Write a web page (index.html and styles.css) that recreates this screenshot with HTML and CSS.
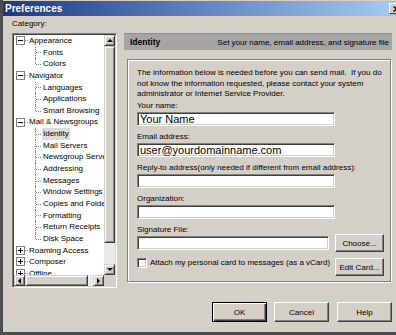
FILE: index.html
```html
<!DOCTYPE html>
<html lang="en">
<head>
    <meta charset="UTF-8">
    <title>Preferences</title>
    <link rel="stylesheet" href="styles.css">
</head>
<body>

<div class="window">
    <div class="titlebar">
        <span class="title">Preferences</span>
        <span class="close-btn">
            <svg width="7" height="6" viewBox="0 0 7 6"><path d="M0.5 0.5 L6.5 5.5 M6.5 0.5 L0.5 5.5" stroke="#000" stroke-width="1.4"/></svg>
        </span>
    </div>

    <div class="content">
        <div class="panes">
            <div class="left-pane">
                <div class="cat-label">Category:</div>
                <div class="tree-box">
                    <div class="tree-main">
                        <div class="tree-list">
                            <div class="node"><span class="exp minus"></span><span class="dash"></span><span class="lbl">Appearance</span></div>
                            <div class="child"><span class="lbl">Fonts</span></div>
                            <div class="child last"><span class="lbl">Colors</span></div>
                            <div class="node"><span class="exp minus"></span><span class="dash"></span><span class="lbl">Navigator</span></div>
                            <div class="child"><span class="lbl">Languages</span></div>
                            <div class="child"><span class="lbl">Applications</span></div>
                            <div class="child last"><span class="lbl">Smart Browsing</span></div>
                            <div class="node"><span class="exp minus"></span><span class="dash"></span><span class="lbl">Mail &amp; Newsgroups</span></div>
                            <div class="child"><span class="lbl sel">Identity</span></div>
                            <div class="child"><span class="lbl">Mail Servers</span></div>
                            <div class="child"><span class="lbl">Newsgroup Servers</span></div>
                            <div class="child"><span class="lbl">Addressing</span></div>
                            <div class="child"><span class="lbl">Messages</span></div>
                            <div class="child"><span class="lbl">Window Settings</span></div>
                            <div class="child"><span class="lbl">Copies and Folders</span></div>
                            <div class="child"><span class="lbl">Formatting</span></div>
                            <div class="child"><span class="lbl">Return Receipts</span></div>
                            <div class="child last"><span class="lbl">Disk Space</span></div>
                            <div class="node"><span class="exp plus"></span><span class="dash"></span><span class="lbl">Roaming Access</span></div>
                            <div class="node"><span class="exp plus"></span><span class="dash"></span><span class="lbl">Composer</span></div>
                            <div class="node"><span class="exp plus"></span><span class="dash"></span><span class="lbl">Offline</span></div>
                        </div>
                        <div class="vscroll">
                            <div class="sbtn"><span class="arrow up"></span></div>
                            <div class="vthumb raised"></div>
                            <div class="track"></div>
                            <div class="sbtn"><span class="arrow down"></span></div>
                        </div>
                    </div>
                    <div class="hscroll">
                        <div class="sbtn"><span class="arrow left"></span></div>
                        <div class="hthumb raised"></div>
                        <div class="track"></div>
                        <div class="sbtn"><span class="arrow right"></span></div>
                        <div class="corner"></div>
                    </div>
                </div>
            </div>

            <div class="right-pane">
                <div class="pane-header">
                    <span class="pane-title">Identity</span>
                    <span class="pane-desc">Set your name, email address, and signature file</span>
                </div>
                <div class="groupbox">
                    <p class="intro">The information below is needed before you can send mail.&nbsp; If you do not know the information requested, please contact your system administrator or Internet Service Provider.</p>

                    <div class="field">
                        <div class="flabel">Your name:</div>
                        <input class="tbox" type="text" value="Your Name">
                    </div>
                    <div class="field">
                        <div class="flabel">Email address:</div>
                        <input class="tbox" type="text" value="user@yourdomainname.com">
                    </div>
                    <div class="field">
                        <div class="flabel">Reply-to address(only needed if different from email address):</div>
                        <input class="tbox" type="text" value="">
                    </div>
                    <div class="field">
                        <div class="flabel">Organization:</div>
                        <input class="tbox" type="text" value="">
                    </div>
                    <div class="field sig">
                        <div class="flabel">Signature File:</div>
                        <div class="sig-row">
                            <input class="tbox short" type="text" value="">
                            <button class="btn side-btn">Choose...</button>
                        </div>
                    </div>
                    <div class="check-row">
                        <span class="check"></span>
                        <span class="check-label">Attach my personal card to messages (as a vCard)</span>
                        <button class="btn side-btn">Edit Card...</button>
                    </div>
                </div>
            </div>
        </div>

        <div class="footer">
            <button class="btn dlg-btn default">OK</button>
            <button class="btn dlg-btn">Cancel</button>
            <button class="btn dlg-btn help">Help</button>
        </div>
    </div>
</div>

</body>
</html>
```

FILE: styles.css
```css
body {
    margin: 0;
    background-color: #d4d0c8;
    font-family: "Liberation Sans", Arial, sans-serif;
    font-size: 8px;
    color: #000;
    overflow: hidden;
}
.window {
    width: 396px;
    height: 335px;
    box-sizing: border-box;
    border-left: 3px solid #4d4d4d;
    border-bottom: 3px solid #4d4d4d;
    padding-top: 1px;
}
.titlebar {
    height: 15px;
    display: flex;
    align-items: center;
    justify-content: space-between;
    padding-left: 2px;
    background: linear-gradient(to right, #1c3a84, #5a7cba 45%, #a6caf0);
}
.title {
    color: #fff;
    font-weight: bold;
    font-size: 10px;
}
.close-btn {
    width: 14px;
    height: 11px;
    margin-right: -7px;
    box-sizing: border-box;
    display: flex;
    align-items: center;
    justify-content: center;
    background: #d4d0c8;
    border: 1px solid;
    border-color: #fff #404040 #404040 #fff;
}
.content {
    padding: 3px 4px 0 9px;
}
.panes {
    display: flex;
    gap: 7px;
}
.left-pane {
    width: 105px;
}
.cat-label {
    line-height: 10px;
    margin-bottom: 4px;
}
.tree-box {
    height: 255px;
    box-sizing: border-box;
    border: 1px solid;
    border-color: #808080 #fff #fff #808080;
    box-shadow: inset 1px 1px #404040, inset -1px -1px #d4d0c8;
    padding: 1px;
    background: #fff;
    display: flex;
    flex-direction: column;
}
.tree-main {
    flex: 1;
    display: flex;
    min-height: 0;
}
.tree-list {
    flex: 1;
    overflow: hidden;
    white-space: nowrap;
}
.node, .child {
    height: 11.65px;
    line-height: 11.65px;
    position: relative;
}
.node {
    display: flex;
    align-items: center;
    padding-left: 2px;
}
.child {
    padding-left: 28px;
}
.child::before {
    content: "";
    position: absolute;
    left: 21px;
    top: 0;
    height: 100%;
    border-left: 1px dotted #808080;
}
.child.last::before {
    height: 50%;
}
.child::after {
    content: "";
    position: absolute;
    left: 22px;
    top: 50%;
    width: 5px;
    border-top: 1px dotted #808080;
}
.exp {
    width: 9px;
    height: 9px;
    box-sizing: border-box;
    border: 1px solid #808080;
}
.exp.minus {
    background: linear-gradient(#000, #000) center / 5px 1px no-repeat, #fff;
}
.exp.plus {
    background: linear-gradient(#000, #000) center / 5px 1px no-repeat,
                linear-gradient(#000, #000) center / 1px 5px no-repeat, #fff;
}
.dash {
    width: 3px;
    border-top: 1px dotted #808080;
}
.lbl {
    display: inline-block;
    padding: 0 1px;
    line-height: 11.65px;
}
.lbl.sel {
    background: #dcdcdc;
}
.vscroll {
    width: 11px;
    display: flex;
    flex-direction: column;
}
.hscroll {
    height: 11px;
    display: flex;
}
.sbtn, .raised {
    background: #d4d0c8;
    box-sizing: border-box;
    border: 1px solid;
    border-color: #d4d0c8 #404040 #404040 #d4d0c8;
    box-shadow: inset 1px 1px #fff, inset -1px -1px #808080;
}
.sbtn {
    width: 11px;
    height: 11px;
    flex-shrink: 0;
    display: flex;
    align-items: center;
    justify-content: center;
}
.vthumb {
    height: 197px;
}
.hthumb {
    width: 63px;
}
.track {
    flex: 1;
    background: #ebe9e4;
}
.corner {
    width: 11px;
    background: #d4d0c8;
}
.arrow {
    width: 0;
    height: 0;
    border: 3px solid transparent;
}
.arrow.up {
    border-top: 0;
    border-bottom-color: #000;
}
.arrow.down {
    border-bottom: 0;
    border-top-color: #000;
}
.arrow.left {
    border-left: 0;
    border-right-color: #000;
}
.arrow.right {
    border-right: 0;
    border-left-color: #000;
}
.right-pane {
    width: 268px;
    padding-top: 14px;
}
.pane-header {
    height: 17px;
    display: flex;
    align-items: center;
    justify-content: space-between;
    padding: 0 3px 0 6px;
    background: #a5a5a5;
    border-top: 1px solid #8e8e8e;
    box-sizing: border-box;
}
.pane-title {
    font-weight: bold;
    font-size: 8.5px;
}
.groupbox {
    margin: 9px 1px 0 3px;
    height: 223px;
    box-sizing: border-box;
    border: 1px solid #808080;
    box-shadow: inset 1px 1px #fff, 1px 1px #fff;
    padding: 8px 6px 0 9px;
}
.intro {
    margin: 0 0 1.5px 0;
    line-height: 10.5px;
}
.field {
    margin-bottom: 6px;
}
.flabel {
    line-height: 10px;
    margin-bottom: 1px;
}
.tbox {
    display: block;
    width: 198px;
    height: 14px;
    margin: 0;
    box-sizing: border-box;
    border: 1px solid;
    border-color: #808080 #fff #fff #808080;
    box-shadow: inset 1px 1px #404040, inset -1px -1px #d4d0c8;
    padding: 0 2px;
    background: #fff;
    font-family: "Liberation Sans", Arial, sans-serif;
    font-size: 11px;
    color: #000;
    outline: none;
}
.tbox.short {
    width: 192px;
}
.sig-row {
    display: flex;
    align-items: flex-start;
}
.btn {
    background: #d4d0c8;
    box-sizing: border-box;
    border: 1px solid;
    border-color: #fff #404040 #404040 #fff;
    box-shadow: inset -1px -1px #808080;
    font-family: "Liberation Sans", Arial, sans-serif;
    font-size: 8px;
    color: #000;
    padding: 0;
    margin: 0;
}
.side-btn {
    width: 49px;
    height: 18px;
    margin-left: auto;
}
.sig-row .side-btn {
    margin-top: -2px;
}
.check-row {
    display: flex;
    align-items: flex-start;
    margin-top: 6px;
}
.check {
    width: 10px;
    height: 10px;
    box-sizing: border-box;
    border: 1px solid;
    border-color: #808080 #fff #fff #808080;
    box-shadow: inset 1px 1px #404040, inset -1px -1px #d4d0c8;
    background: #fff;
}
.check-label {
    margin-left: 3px;
    line-height: 10px;
}
.footer {
    display: flex;
    justify-content: flex-end;
    gap: 7px;
    margin-top: 14px;
}
.dlg-btn {
    width: 55px;
    height: 20px;
}
.dlg-btn.default {
    border-color: #000;
    box-shadow: inset 1px 1px #fff, inset -1px -1px #404040, inset -2px -2px #808080;
}
.dlg-btn.help {
    margin-left: 1px;
}
```
